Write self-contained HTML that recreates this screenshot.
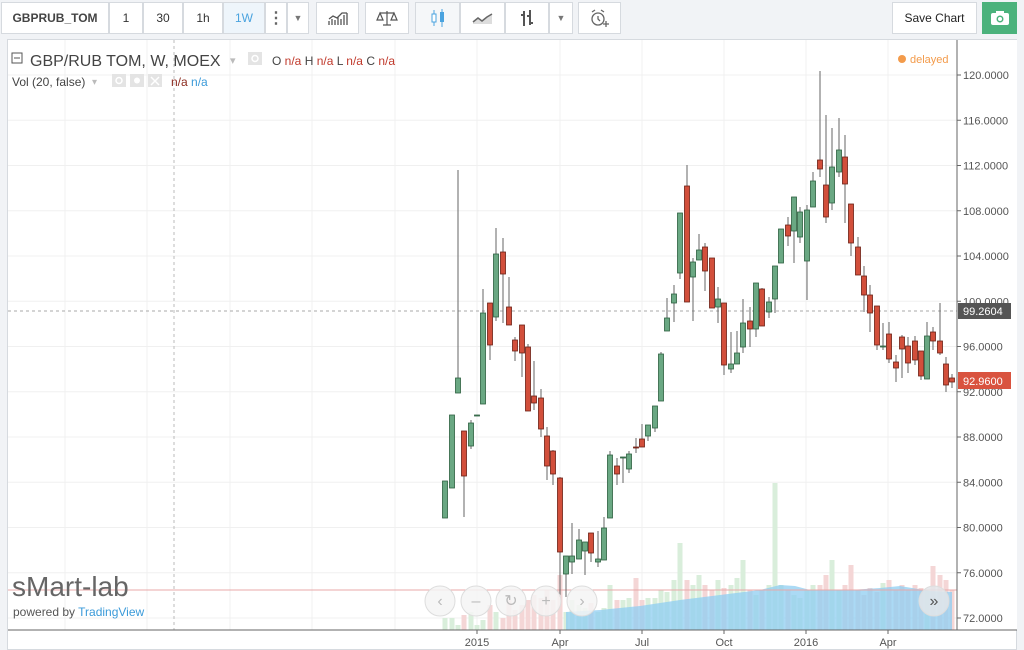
<!DOCTYPE html>
<html><head><meta charset="utf-8"><style>
*{margin:0;padding:0;box-sizing:border-box}
body{width:1024px;height:650px;background:#f1f3f6;font-family:"Liberation Sans",sans-serif;position:relative;overflow:hidden}
.b{position:absolute;top:2px;height:32px;background:#fff;border:1px solid #d6dadf;font-size:12px;color:#333;display:flex;align-items:center;justify-content:center}
#chart{position:absolute;left:7px;top:39px;width:1010px;height:611px;background:#fff;border:1px solid #d6dadf}
</style></head><body>
<div class="b" style="left:1px;width:108px;font-weight:bold;color:#444">GBPRUB_TOM</div>
<div class="b" style="left:109px;width:34px">1</div>
<div class="b" style="left:143px;width:40px">30</div>
<div class="b" style="left:183px;width:40px">1h</div>
<div class="b" style="left:223px;width:42px;background:#eef5fb;color:#4aa3df">1W</div>
<div class="b" style="left:265px;width:22px;font-size:16px;font-weight:bold;color:#666">⋮</div>
<div class="b" style="left:287px;width:22px;font-size:9px;color:#777">▼</div>
<div class="b" style="left:316px;width:43px"><svg width="22" height="16"><path d="M2 15v-4M5 15v-6M8 15v-5M11 15v-8M14 15v-6M17 15v-10M20 15v-12M2 9l4-3 4 2 5-5 5 0" stroke="#555" fill="none" stroke-width="1.3"/></svg></div>
<div class="b" style="left:365px;width:44px"><svg width="22" height="16"><path d="M11 1v14M4 3h14M4 3l-3 7h6zM18 3l-3 7h6zM7 15h8" stroke="#555" fill="none" stroke-width="1.2"/></svg></div>
<div class="b" style="left:415px;width:45px;background:#f5f7f9"><svg width="16" height="20"><path d="M4 2v16M12 1v18" stroke="#4aa3df"/><rect x="2" y="6" width="4" height="8" fill="#fff" stroke="#4aa3df"/><rect x="10" y="4" width="4" height="10" fill="#4aa3df"/></svg></div>
<div class="b" style="left:460px;width:45px"><svg width="22" height="14"><path d="M1 11l5-4 4 3 5-4 5-3v10H1z" fill="#ddd"/><path d="M1 11l5-4 4 3 5-4 5-3" stroke="#666" fill="none" stroke-width="1.5"/></svg></div>
<div class="b" style="left:505px;width:44px"><svg width="18" height="20"><path d="M6 3v15M3 7h3M12 2v15M12 15h3M9 8h3" stroke="#555" stroke-width="2" fill="none"/></svg></div>
<div class="b" style="left:549px;width:24px;font-size:9px;color:#777">▼</div>
<div class="b" style="left:578px;width:43px"><svg width="22" height="20"><circle cx="9" cy="11" r="6" stroke="#666" fill="none" stroke-width="1.3"/><path d="M9 8v3l2 2M3 4l3-2M15 4l-3-2M17 13v6M14 16h6" stroke="#666" fill="none" stroke-width="1.3"/></svg></div>
<div class="b" style="left:892px;width:85px;font-size:12px;color:#222">Save Chart</div>
<div class="b" style="left:982px;width:35px;background:#4bb27c;border-color:#4bb27c"><svg width="20" height="16"><rect x="1" y="3" width="18" height="12" rx="2" fill="#fff"/><rect x="6" y="1" width="8" height="3" fill="#fff"/><circle cx="10" cy="9" r="3.5" fill="#4bb27c"/><circle cx="10" cy="9" r="2" fill="#fff"/></svg></div>
<div id="chart"></div>
<svg id="s" width="1024" height="650" style="position:absolute;left:0;top:0"></svg>
<script>
var s='';
function L(x1,y1,x2,y2,c,w,d){s+='<line x1="'+x1+'" y1="'+y1+'" x2="'+x2+'" y2="'+y2+'" stroke="'+c+'" stroke-width="'+(w||1)+'"'+(d?' stroke-dasharray="'+d+'"':'')+'/>';}
function T(x,y,t,c,sz,a,extra){s+='<text x="'+x+'" y="'+y+'" fill="'+c+'" font-size="'+sz+'" font-family="Liberation Sans,sans-serif"'+(a?' text-anchor="'+a+'"':'')+(extra||'')+'>'+t+'</text>';}
var prices=[120,116,112,108,104,100,96,92,88,84,80,76,72];
prices.forEach(function(p,i){var y=75+i*45.25;L(8,y,957,y,'#f0f0f0');});
[65,147,230,312,395,477,560,642,724,806,888].forEach(function(x){L(x,40,x,630,'#f0f0f0');});
L(174,40,174,630,'#bbb',1,'3,3');
var C=[[445,481,481,518,518,'g'],[452,415,415,488,488,'g'],[458,170,378,393,393,'g'],[464,431,431,476,517,'r'],[471,420,423,446,449,'g'],[477,415,415,416,416,'g'],[483,289,313,404,404,'g'],[490,303,303,345,360,'r'],[496,228,254,317,321,'g'],[503,238,252,274,323,'r'],[509,277,307,325,325,'r'],[515,337,340,351,361,'r'],[522,325,325,353,377,'r'],[528,344,347,411,411,'r'],[534,361,396,403,410,'r'],[541,389,398,429,437,'r'],[547,427,436,466,480,'r'],[553,450,451,474,485,'r'],[560,477,478,552,597,'r'],[566,556,556,574,597,'g'],[572,523,556,562,574,'g'],[579,529,540,559,559,'g'],[585,542,542,551,575,'g'],[591,533,533,553,562,'r'],[598,531,559,562,567,'g'],[604,517,528,560,560,'g'],[610,451,455,518,518,'g'],[617,458,466,474,485,'r'],[623,457,457,458,483,'g'],[629,451,454,469,473,'g'],[636,438,447,448,453,'r'],[642,424,439,447,447,'r'],[648,425,425,436,441,'g'],[655,406,406,428,432,'g'],[661,352,354,401,401,'g'],[667,298,318,331,331,'g'],[674,285,294,303,322,'g'],[680,213,213,273,279,'g'],[687,165,186,302,302,'r'],[693,258,262,277,321,'g'],[699,234,250,260,260,'g'],[705,243,247,271,291,'r'],[712,258,258,308,308,'r'],[718,287,299,307,323,'g'],[724,303,303,365,375,'r'],[731,332,364,369,373,'g'],[737,331,353,364,364,'g'],[743,299,323,347,353,'g'],[750,307,321,329,347,'r'],[756,283,283,329,337,'g'],[762,288,289,326,326,'r'],[769,297,302,312,318,'g'],[775,266,266,299,313,'g'],[781,229,229,263,263,'g'],[788,217,225,236,246,'r'],[794,197,197,231,263,'g'],[800,207,212,237,243,'g'],[807,205,210,261,300,'g'],[813,172,181,207,207,'g'],[820,71,160,169,177,'r'],[826,115,185,217,223,'r'],[832,128,167,203,210,'g'],[839,118,150,172,177,'g'],[845,135,157,184,223,'r'],[851,204,204,243,256,'r'],[858,237,247,275,275,'r'],[864,266,276,295,312,'r'],[870,285,295,313,332,'r'],[877,306,306,345,350,'r'],[883,323,346,347,350,'g'],[889,322,334,359,363,'r'],[896,355,362,368,382,'r'],[902,335,337,349,378,'r'],[908,337,346,363,373,'r'],[915,336,341,360,365,'r'],[921,351,351,376,380,'r'],[927,322,336,379,379,'g'],[933,327,332,341,350,'r'],[940,303,341,353,355,'r'],[946,357,364,385,392,'r'],[952,374,378,382,388,'r']];
var vh=[618,618,625,615,612,625,620,605,612,618,600,610,605,600,595,598,590,600,575,612,600,605,608,603,612,608,585,600,600,598,578,600,598,598,590,592,580,543,580,585,575,585,590,580,588,585,578,560,590,595,590,585,483,585,590,595,598,590,585,585,575,560,590,585,565,590,595,588,592,583,580,590,585,590,585,588,590,566,575,580,590];
for(var i=0;i<C.length;i++){var col=C[i][5]=='r'?'#f4d6d6':'#d9eedb';s+='<rect x="'+(C[i][0]-2.5)+'" y="'+vh[i]+'" width="5" height="'+(630-vh[i])+'" fill="'+col+'"/>';}
s+='<path d="M566 630L566 612L600 610L640 606L680 600L720 595L760 590L780 585L795 586L810 590L850 590L880 588L900 586L930 591L952 592L952 630Z" fill="#8fcdf2" fill-opacity="0.75"/>';
L(8,590,957,590,'#e8a8a8');
L(8,311,957,311,'#aaa',1,'3,3');
C.forEach(function(c){var f=c[5]=='g'?'#6aa883':'#d24f3b',st=c[5]=='g'?'#2c5f3f':'#6b1f14';L(c[0],c[1],c[0],c[4],'#666');var h=Math.max(1,c[3]-c[2]);s+='<rect x="'+(c[0]-2.5)+'" y="'+c[2]+'" width="5" height="'+h+'" fill="'+f+'" stroke="'+st+'" stroke-width="0.8"/>';});
[440,476,511,546,582,934].forEach(function(x,i){s+='<circle cx="'+x+'" cy="601" r="15" fill="'+(i==5?'#e3e6ea':'#f4f4f4')+'" fill-opacity="0.85" stroke="#ddd"/>';T(x,606,['‹','–','↻','+','›','»'][i],i==5?'#555':'#bbb',16,'middle');});
s+='<rect x="958" y="40" width="59" height="590" fill="#fff"/>';
L(957,40,957,630,'#666');
prices.forEach(function(p,i){var y=75+i*45.25;L(957,y,961,y,'#666');T(963,y+4,p.toFixed(4),'#555',11);});
s+='<rect x="958" y="303" width="53" height="16" fill="#555"/>';T(963,315,'99.2604','#fff',11);
s+='<rect x="958" y="372" width="53" height="17" fill="#d9533f"/>';T(963,385,'92.9600','#fff',11);
L(8,630,1017,630,'#666');
[[477,'2015'],[560,'Apr'],[642,'Jul'],[724,'Oct'],[806,'2016'],[888,'Apr']].forEach(function(a){L(a[0],630,a[0],634,'#666');T(a[0],646,a[1],'#555',11,'middle');});
s+='<rect x="12" y="53" width="10" height="10" fill="none" stroke="#555"/>';L(14,58,20,58,'#555');
T(30,66,'GBP/RUB TOM, W, MOEX','#444',16);T(230,64,'▾','#bbb',11);
s+='<rect x="248" y="52" width="14" height="13" fill="#e4e4e4"/><circle cx="255" cy="58.5" r="3" fill="none" stroke="#fff" stroke-width="1.5"/>';
s+='<text x="272" y="65" font-size="12" font-family="Liberation Sans,sans-serif" fill="#444">O <tspan fill="#c0392b">n/a</tspan> H <tspan fill="#c0392b">n/a</tspan> L <tspan fill="#c0392b">n/a</tspan> C <tspan fill="#c0392b">n/a</tspan></text>';
T(12,86,'Vol (20, false)','#444',12);T(92,85,'▾','#bbb',10);
s+='<rect x="112" y="74" width="14" height="13" fill="#e4e4e4"/><rect x="130" y="74" width="14" height="13" fill="#e4e4e4"/><rect x="148" y="74" width="14" height="13" fill="#e4e4e4"/><circle cx="119" cy="80.5" r="3" fill="none" stroke="#fff" stroke-width="1.5"/><circle cx="137" cy="80.5" r="3" fill="#fff"/>';L(151,77,159,85,'#fff',1.5);L(159,77,151,85,'#fff',1.5);
s+='<text x="171" y="86" font-size="12" font-family="Liberation Sans,sans-serif" fill="#8b2a1e">n/a <tspan fill="#3a9ad9">n/a</tspan></text>';
s+='<circle cx="902" cy="59" r="4" fill="#f39b4b"/>';T(910,63,'delayed','#f39b4b',11);
T(12,596,'sMart-lab','#666',28);
s+='<text x="13" y="616" font-size="12" font-family="Liberation Sans,sans-serif" fill="#555">powered by <tspan fill="#3a9ad9">TradingView</tspan></text>';
document.getElementById('s').innerHTML=s;
</script>
</body></html>
